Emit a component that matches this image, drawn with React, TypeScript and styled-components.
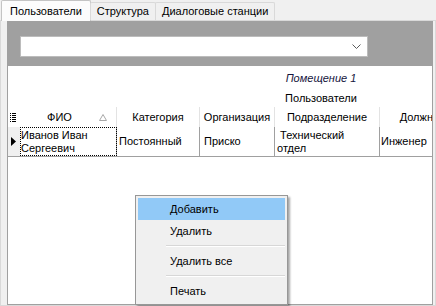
import styled, { createGlobalStyle } from "styled-components";

const GlobalStyle = createGlobalStyle`
  html, body {
    margin: 0;
    padding: 0;
  }
  body {
    background: #f0f0f0;
    font-family: "Liberation Sans", Arial, sans-serif;
    font-size: 11px;
    color: #000;
  }
`;

const Window = styled.div`
  position: relative;
  width: 436px;
  height: 306px;
  display: flex;
  flex-direction: column;
  overflow: hidden;
  background: #f0f0f0;
`;

const TabStrip = styled.div`
  height: 20px;
  display: flex;
  align-items: flex-end;
  padding-left: 1px;
  position: relative;
  z-index: 1;
`;

const Tab = styled.div<{ $active?: boolean }>`
  box-sizing: border-box;
  height: ${p => (p.$active ? 21 : 18)}px;
  padding: 0 ${p => (p.$active ? 8 : 6)}px 1px;
  margin-bottom: ${p => (p.$active ? -1 : 0)}px;
  display: flex;
  align-items: center;
  background: ${p => (p.$active ? "#fcfcfc" : "#f0f0f0")};
  border: 1px solid ${p => (p.$active ? "#c4c4c4" : "#d9d9d9")};
  border-bottom: none;
  border-radius: 2px 2px 0 0;
  & + & {
    margin-left: -1px;
  }
`;

const TabPage = styled.div`
  flex: 1;
  display: flex;
  box-sizing: border-box;
  border: 1px solid #d9d9d9;
  padding: 0 2px 0 6px;
  background: #f0f0f0;
`;

const GridControl = styled.div`
  flex: 1;
  display: flex;
  flex-direction: column;
  border: 1px solid #a0a0a0;
  overflow: hidden;
`;

const FilterBar = styled.div`
  height: 44px;
  box-sizing: border-box;
  padding: 14px 0 0 12px;
  background: #a0a0a0;
`;

const Combo = styled.div`
  width: 348px;
  height: 21px;
  box-sizing: border-box;
  border: 1px solid #bcbcbc;
  background: #fff;
  display: flex;
  align-items: center;
  justify-content: flex-end;
  padding-right: 6px;
  svg {
    display: block;
  }
`;

const GridBody = styled.div`
  flex: 1;
  background: #fff;
  padding-top: 2px;
  overflow: hidden;
`;

const Band = styled.div<{ $italic?: boolean; $h: number }>`
  margin-left: 191px;
  width: 244px;
  height: ${p => p.$h}px;
  display: flex;
  align-items: center;
  justify-content: center;
  font-style: ${p => (p.$italic ? "italic" : "normal")};
  color: ${p => (p.$italic ? "#14143c" : "#000")};
  white-space: nowrap;
`;

const Row = styled.div<{ $data?: boolean }>`
  display: grid;
  grid-template-columns: 12px 97px 83px 75px 105px 96px;
  height: ${p => (p.$data ? 30 : 20)}px;
  box-sizing: border-box;
  border-bottom: ${p => (p.$data ? "1px solid #a0a0a0" : "none")};
  width: 468px;
`;

const HeaderCell = styled.div`
  box-sizing: border-box;
  display: flex;
  align-items: center;
  justify-content: center;
  border-right: 1px solid #e3e3e3;
  white-space: nowrap;
  overflow: hidden;
  &:first-child {
    border-right: none;
  }
`;

const HeaderLabel = styled.span`
  flex: 1;
  text-align: center;
`;

const SortMark = styled.svg`
  margin-right: 9px;
  flex: none;
`;

const Indicator = styled.div<{ $data?: boolean }>`
  display: flex;
  align-items: center;
  padding-left: ${p => (p.$data ? 3 : 2)}px;
  background: ${p => (p.$data ? "#f0f0f0" : "#fff")};
  svg {
    display: block;
  }
`;

const Cell = styled.div<{ $focus?: boolean; $pad?: number }>`
  box-sizing: border-box;
  display: flex;
  align-items: center;
  padding-left: ${p => p.$pad ?? 2}px;
  line-height: 13px;
  border-right: 1px solid #a0a0a0;
  outline: ${p => (p.$focus ? "1px dotted #000" : "none")};
  outline-offset: -1px;
  white-space: pre-line;
  overflow: hidden;
`;

const Menu = styled.div`
  position: absolute;
  left: 135px;
  top: 195px;
  width: 153px;
  box-sizing: border-box;
  padding: 2px;
  background: #f0f0f0;
  border: 1px solid #979797;
  box-shadow: 2px 2px 2px rgba(0, 0, 0, 0.35);
  z-index: 5;
`;

const MenuItem = styled.div<{ $hot?: boolean }>`
  height: 22px;
  line-height: 22px;
  padding-left: 32px;
  background: ${p => (p.$hot ? "#91c9f7" : "transparent")};
  white-space: nowrap;
`;

const MenuSeparator = styled.div`
  height: 8px;
  margin-left: 28px;
  display: flex;
  flex-direction: column;
  justify-content: center;
  &::before {
    content: "";
    height: 1px;
    background: #d7d7d7;
  }
  &::after {
    content: "";
    height: 1px;
    background: #fff;
  }
`;

const columns = ["Категория", "Организация", "Подразделение", "Должность"];

const row = {
  fio: "Иванов Иван\nСергеевич",
  category: "Постоянный",
  org: "Приско",
  dept: "\u00a0Технический\nотдел",
  post: "Инженер",
};

const App = () => {
  return (
    <>
      <GlobalStyle />
      <Window>
        <TabStrip>
          <Tab $active>Пользователи</Tab>
          <Tab>Структура</Tab>
          <Tab>Диалоговые станции</Tab>
        </TabStrip>
        <TabPage>
          <GridControl>
            <FilterBar>
              <Combo>
                <svg width="9" height="6" viewBox="0 0 9 6">
                  <polyline points="0.5,0.5 4.5,4.5 8.5,0.5" fill="none" stroke="#5a5a5a" strokeWidth="1" />
                </svg>
              </Combo>
            </FilterBar>
            <GridBody>
              <Band $italic $h={20}>Помещение 1</Band>
              <Band $h={19}>Пользователи</Band>
              <Row>
                <Indicator>
                  <svg width="6" height="9" viewBox="0 0 6 9">
                    {[0, 2, 4, 6, 8].map(y => (
                      <g key={y} fill="#000">
                        <rect x="0" y={y} width="1" height="1" />
                        <rect x="2" y={y} width="4" height="1" />
                      </g>
                    ))}
                  </svg>
                </Indicator>
                <HeaderCell>
                  <HeaderLabel>ФИО</HeaderLabel>
                  <SortMark width="8" height="7" viewBox="0 0 8 7">
                    <polygon points="4,0.5 7.5,6.5 0.5,6.5" fill="none" stroke="#a8a8a8" strokeWidth="1" />
                  </SortMark>
                </HeaderCell>
                {columns.map(c => (
                  <HeaderCell key={c}>{c}</HeaderCell>
                ))}
              </Row>
              <Row $data>
                <Indicator $data>
                  <svg width="5" height="9" viewBox="0 0 5 9">
                    <polygon points="0,0 5,4.5 0,9" fill="#000" />
                  </svg>
                </Indicator>
                <Cell $focus $pad={1}>{row.fio}</Cell>
                <Cell>{row.category}</Cell>
                <Cell $pad={4}>{row.org}</Cell>
                <Cell>{row.dept}</Cell>
                <Cell $pad={1}>{row.post}</Cell>
              </Row>
            </GridBody>
          </GridControl>
        </TabPage>
        <Menu>
          <MenuItem $hot>Добавить</MenuItem>
          <MenuItem>Удалить</MenuItem>
          <MenuSeparator />
          <MenuItem>Удалить все</MenuItem>
          <MenuSeparator />
          <MenuItem>Печать</MenuItem>
        </Menu>
      </Window>
    </>
  );
};

export default App;
